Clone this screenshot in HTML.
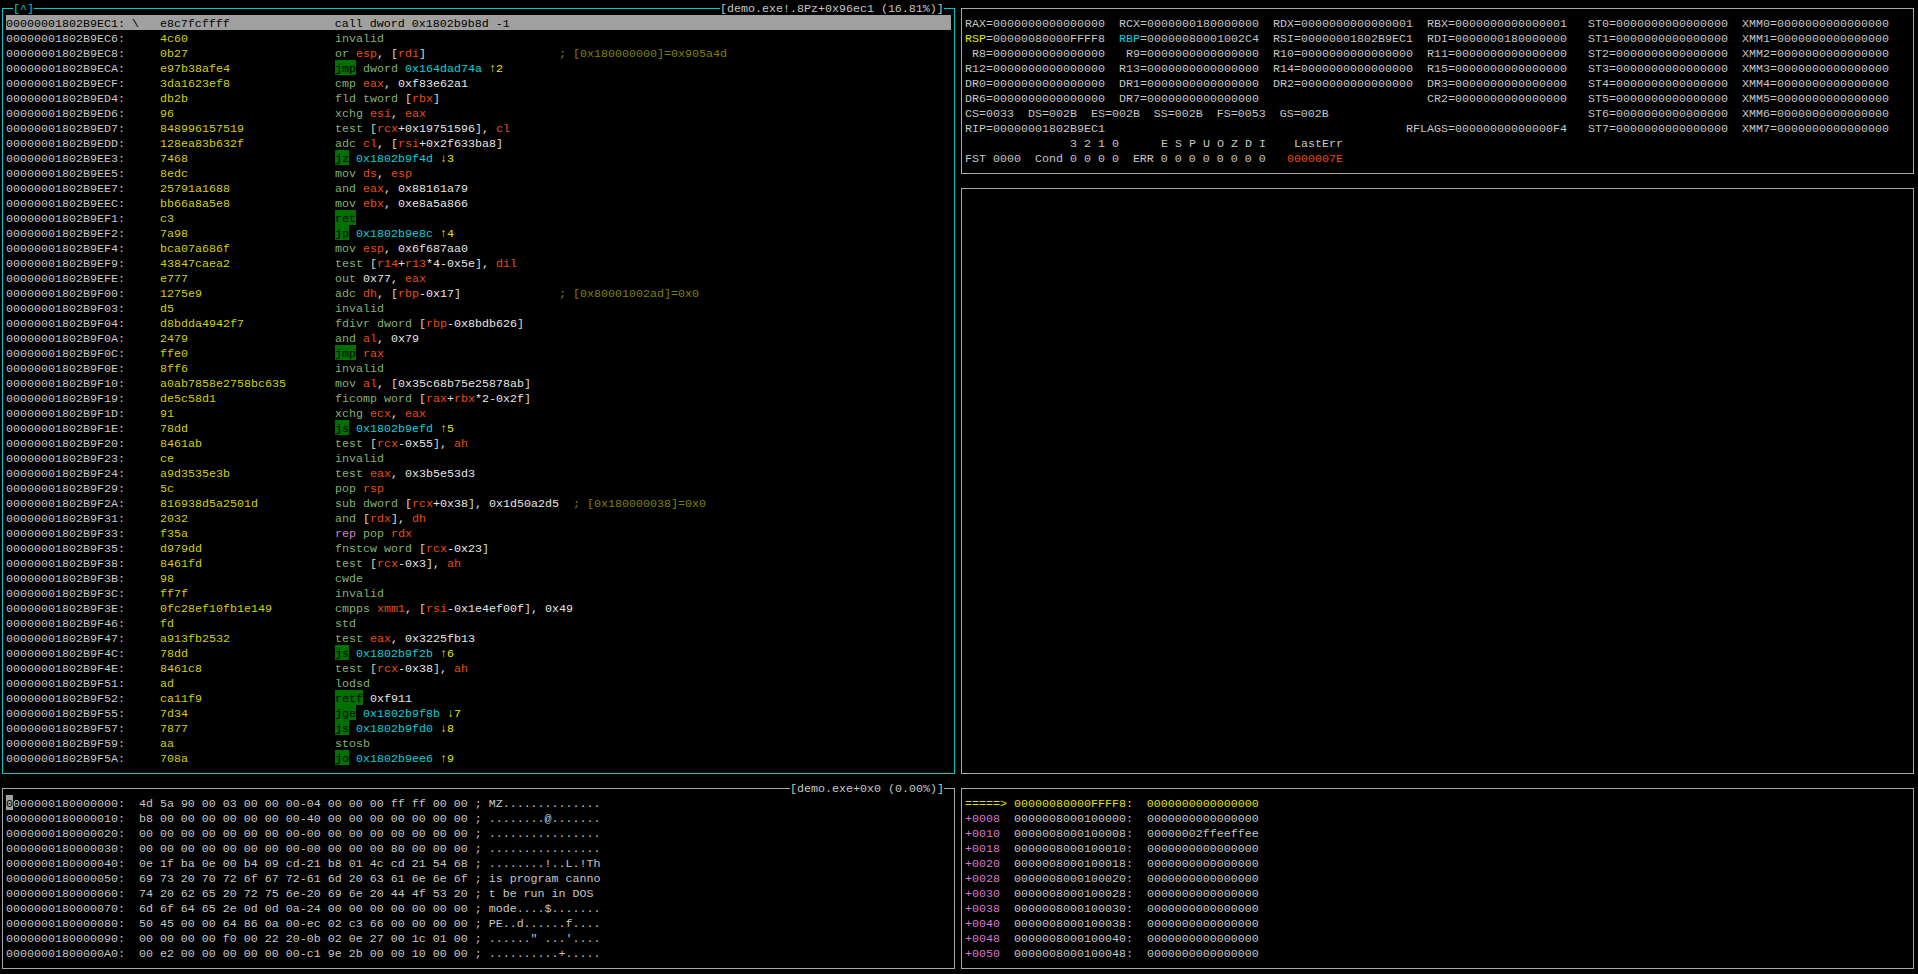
<!DOCTYPE html>
<html><head><meta charset="utf-8"><style>
html,body{margin:0;padding:0;background:#000;width:1918px;height:974px;overflow:hidden;}
body{position:relative;font-family:"Liberation Mono",monospace;font-size:11.665px;color:#c6c6c6;}
.s{position:absolute;white-space:pre;line-height:15px;height:15px;}
.l{position:absolute;}
.hl{position:absolute;left:6px;top:15px;width:945px;height:15px;background:#a0a0a0;}
.hlt{color:#000;}
.addr{color:#c8c8c8}.byte{color:#d2d200}.mn{color:#84b074}.reg{color:#e84c0c}.num{color:#e6e6e6}
.br{color:#d8d8c8}.tgt{color:#00d2dc}.arr{color:#e6e600}.cmt{color:#808000}
.jmp{color:#000;}
.cyan{color:#00c8c8}.txt{color:#c6c6c6}.yel{color:#e0e000}.pink{color:#d878c8}.rep{color:#d080c0}
.cur{color:#000;}
</style></head><body>
<div class="hl"></div>
<div class="l" style="left:2px;top:8px;width:11px;height:1px;background:#00c8c8"></div>
<div class="l" style="left:34px;top:8px;width:686px;height:1px;background:#00c8c8"></div>
<div class="l" style="left:944px;top:8px;width:11px;height:1px;background:#00c8c8"></div>
<div class="l" style="left:2px;top:773px;width:953px;height:1px;background:#00c8c8"></div>
<div class="l" style="left:2px;top:8px;width:1px;height:766px;background:#00c8c8"></div>
<div class="l" style="left:954px;top:8px;width:1px;height:766px;background:#00c8c8"></div>
<div class="l" style="left:961px;top:8px;width:953px;height:1px;background:#a8a8a8"></div>
<div class="l" style="left:961px;top:173px;width:953px;height:1px;background:#a8a8a8"></div>
<div class="l" style="left:961px;top:8px;width:1px;height:166px;background:#a8a8a8"></div>
<div class="l" style="left:1913px;top:8px;width:1px;height:166px;background:#a8a8a8"></div>
<div class="l" style="left:961px;top:188px;width:953px;height:1px;background:#a8a8a8"></div>
<div class="l" style="left:961px;top:773px;width:953px;height:1px;background:#a8a8a8"></div>
<div class="l" style="left:961px;top:188px;width:1px;height:586px;background:#a8a8a8"></div>
<div class="l" style="left:1913px;top:188px;width:1px;height:586px;background:#a8a8a8"></div>
<div class="l" style="left:2px;top:788px;width:788px;height:1px;background:#a8a8a8"></div>
<div class="l" style="left:944px;top:788px;width:11px;height:1px;background:#a8a8a8"></div>
<div class="l" style="left:2px;top:968px;width:953px;height:1px;background:#a8a8a8"></div>
<div class="l" style="left:2px;top:788px;width:1px;height:181px;background:#a8a8a8"></div>
<div class="l" style="left:954px;top:788px;width:1px;height:181px;background:#a8a8a8"></div>
<div class="l" style="left:961px;top:788px;width:953px;height:1px;background:#a8a8a8"></div>
<div class="l" style="left:961px;top:968px;width:953px;height:1px;background:#a8a8a8"></div>
<div class="l" style="left:961px;top:788px;width:1px;height:181px;background:#a8a8a8"></div>
<div class="l" style="left:1913px;top:788px;width:1px;height:181px;background:#a8a8a8"></div>
<div class="l" style="left:335px;top:60px;width:21px;height:15px;background:#007000"></div>
<div class="l" style="left:335px;top:150px;width:14px;height:15px;background:#007000"></div>
<div class="l" style="left:335px;top:210px;width:21px;height:15px;background:#007000"></div>
<div class="l" style="left:335px;top:225px;width:14px;height:15px;background:#007000"></div>
<div class="l" style="left:335px;top:345px;width:21px;height:15px;background:#007000"></div>
<div class="l" style="left:335px;top:420px;width:14px;height:15px;background:#007000"></div>
<div class="l" style="left:335px;top:645px;width:14px;height:15px;background:#007000"></div>
<div class="l" style="left:335px;top:690px;width:28px;height:15px;background:#007000"></div>
<div class="l" style="left:335px;top:705px;width:21px;height:15px;background:#007000"></div>
<div class="l" style="left:335px;top:720px;width:14px;height:15px;background:#007000"></div>
<div class="l" style="left:335px;top:750px;width:14px;height:15px;background:#007000"></div>
<div class="l" style="left:6px;top:795px;width:7px;height:15px;background:#a0a0a0"></div>
<div class="s" style="left:6px;top:17px"><span class="hlt">00000001802B9EC1: \   e8c7fcffff               call dword 0x1802b9b8d -1</span></div>
<div class="s" style="left:6px;top:32px"><span class="addr">00000001802B9EC6:</span></div>
<div class="s" style="left:160px;top:32px"><span class="byte">4c60</span></div>
<div class="s" style="left:335px;top:32px"><span class="mn">invalid</span></div>
<div class="s" style="left:6px;top:47px"><span class="addr">00000001802B9EC8:</span></div>
<div class="s" style="left:160px;top:47px"><span class="byte">0b27</span></div>
<div class="s" style="left:335px;top:47px"><span class="mn">or</span> <span class="reg">esp</span><span class="num">,</span> <span class="br">[</span><span class="reg">rdi</span><span class="br">]</span></div>
<div class="s" style="left:559px;top:47px"><span class="cmt">; [0x180000000]=0x905a4d</span></div>
<div class="s" style="left:6px;top:62px"><span class="addr">00000001802B9ECA:</span></div>
<div class="s" style="left:160px;top:62px"><span class="byte">e97b38afe4</span></div>
<div class="s" style="left:335px;top:62px"><span class="jmp">jmp</span> <span class="mn">dword</span> <span class="tgt">0x164dad74a</span> <span class="arr">↑2</span></div>
<div class="s" style="left:6px;top:77px"><span class="addr">00000001802B9ECF:</span></div>
<div class="s" style="left:160px;top:77px"><span class="byte">3da1623ef8</span></div>
<div class="s" style="left:335px;top:77px"><span class="mn">cmp</span> <span class="reg">eax</span><span class="num">,</span> <span class="num">0xf83e62a1</span></div>
<div class="s" style="left:6px;top:92px"><span class="addr">00000001802B9ED4:</span></div>
<div class="s" style="left:160px;top:92px"><span class="byte">db2b</span></div>
<div class="s" style="left:335px;top:92px"><span class="mn">fld</span> <span class="mn">tword</span> <span class="br">[</span><span class="reg">rbx</span><span class="br">]</span></div>
<div class="s" style="left:6px;top:107px"><span class="addr">00000001802B9ED6:</span></div>
<div class="s" style="left:160px;top:107px"><span class="byte">96</span></div>
<div class="s" style="left:335px;top:107px"><span class="mn">xchg</span> <span class="reg">esi</span><span class="num">,</span> <span class="reg">eax</span></div>
<div class="s" style="left:6px;top:122px"><span class="addr">00000001802B9ED7:</span></div>
<div class="s" style="left:160px;top:122px"><span class="byte">848996157519</span></div>
<div class="s" style="left:335px;top:122px"><span class="mn">test</span> <span class="br">[</span><span class="reg">rcx</span><span class="num">+</span><span class="num">0x19751596</span><span class="br">]</span><span class="num">,</span> <span class="reg">cl</span></div>
<div class="s" style="left:6px;top:137px"><span class="addr">00000001802B9EDD:</span></div>
<div class="s" style="left:160px;top:137px"><span class="byte">128ea83b632f</span></div>
<div class="s" style="left:335px;top:137px"><span class="mn">adc</span> <span class="reg">cl</span><span class="num">,</span> <span class="br">[</span><span class="reg">rsi</span><span class="num">+</span><span class="num">0x2f633ba8</span><span class="br">]</span></div>
<div class="s" style="left:6px;top:152px"><span class="addr">00000001802B9EE3:</span></div>
<div class="s" style="left:160px;top:152px"><span class="byte">7468</span></div>
<div class="s" style="left:335px;top:152px"><span class="jmp">jz</span> <span class="tgt">0x1802b9f4d</span> <span class="arr">↓3</span></div>
<div class="s" style="left:6px;top:167px"><span class="addr">00000001802B9EE5:</span></div>
<div class="s" style="left:160px;top:167px"><span class="byte">8edc</span></div>
<div class="s" style="left:335px;top:167px"><span class="mn">mov</span> <span class="reg">ds</span><span class="num">,</span> <span class="reg">esp</span></div>
<div class="s" style="left:6px;top:182px"><span class="addr">00000001802B9EE7:</span></div>
<div class="s" style="left:160px;top:182px"><span class="byte">25791a1688</span></div>
<div class="s" style="left:335px;top:182px"><span class="mn">and</span> <span class="reg">eax</span><span class="num">,</span> <span class="num">0x88161a79</span></div>
<div class="s" style="left:6px;top:197px"><span class="addr">00000001802B9EEC:</span></div>
<div class="s" style="left:160px;top:197px"><span class="byte">bb66a8a5e8</span></div>
<div class="s" style="left:335px;top:197px"><span class="mn">mov</span> <span class="reg">ebx</span><span class="num">,</span> <span class="num">0xe8a5a866</span></div>
<div class="s" style="left:6px;top:212px"><span class="addr">00000001802B9EF1:</span></div>
<div class="s" style="left:160px;top:212px"><span class="byte">c3</span></div>
<div class="s" style="left:335px;top:212px"><span class="jmp">ret</span></div>
<div class="s" style="left:6px;top:227px"><span class="addr">00000001802B9EF2:</span></div>
<div class="s" style="left:160px;top:227px"><span class="byte">7a98</span></div>
<div class="s" style="left:335px;top:227px"><span class="jmp">jp</span> <span class="tgt">0x1802b9e8c</span> <span class="arr">↑4</span></div>
<div class="s" style="left:6px;top:242px"><span class="addr">00000001802B9EF4:</span></div>
<div class="s" style="left:160px;top:242px"><span class="byte">bca07a686f</span></div>
<div class="s" style="left:335px;top:242px"><span class="mn">mov</span> <span class="reg">esp</span><span class="num">,</span> <span class="num">0x6f687aa0</span></div>
<div class="s" style="left:6px;top:257px"><span class="addr">00000001802B9EF9:</span></div>
<div class="s" style="left:160px;top:257px"><span class="byte">43847caea2</span></div>
<div class="s" style="left:335px;top:257px"><span class="mn">test</span> <span class="br">[</span><span class="reg">r14</span><span class="num">+</span><span class="reg">r13</span><span class="num">*</span><span class="num">4</span><span class="num">-</span><span class="num">0x5e</span><span class="br">]</span><span class="num">,</span> <span class="reg">dil</span></div>
<div class="s" style="left:6px;top:272px"><span class="addr">00000001802B9EFE:</span></div>
<div class="s" style="left:160px;top:272px"><span class="byte">e777</span></div>
<div class="s" style="left:335px;top:272px"><span class="mn">out</span> <span class="num">0x77</span><span class="num">,</span> <span class="reg">eax</span></div>
<div class="s" style="left:6px;top:287px"><span class="addr">00000001802B9F00:</span></div>
<div class="s" style="left:160px;top:287px"><span class="byte">1275e9</span></div>
<div class="s" style="left:335px;top:287px"><span class="mn">adc</span> <span class="reg">dh</span><span class="num">,</span> <span class="br">[</span><span class="reg">rbp</span><span class="num">-</span><span class="num">0x17</span><span class="br">]</span></div>
<div class="s" style="left:559px;top:287px"><span class="cmt">; [0x80001002ad]=0x0</span></div>
<div class="s" style="left:6px;top:302px"><span class="addr">00000001802B9F03:</span></div>
<div class="s" style="left:160px;top:302px"><span class="byte">d5</span></div>
<div class="s" style="left:335px;top:302px"><span class="mn">invalid</span></div>
<div class="s" style="left:6px;top:317px"><span class="addr">00000001802B9F04:</span></div>
<div class="s" style="left:160px;top:317px"><span class="byte">d8bdda4942f7</span></div>
<div class="s" style="left:335px;top:317px"><span class="mn">fdivr</span> <span class="mn">dword</span> <span class="br">[</span><span class="reg">rbp</span><span class="num">-</span><span class="num">0x8bdb626</span><span class="br">]</span></div>
<div class="s" style="left:6px;top:332px"><span class="addr">00000001802B9F0A:</span></div>
<div class="s" style="left:160px;top:332px"><span class="byte">2479</span></div>
<div class="s" style="left:335px;top:332px"><span class="mn">and</span> <span class="reg">al</span><span class="num">,</span> <span class="num">0x79</span></div>
<div class="s" style="left:6px;top:347px"><span class="addr">00000001802B9F0C:</span></div>
<div class="s" style="left:160px;top:347px"><span class="byte">ffe0</span></div>
<div class="s" style="left:335px;top:347px"><span class="jmp">jmp</span> <span class="reg">rax</span></div>
<div class="s" style="left:6px;top:362px"><span class="addr">00000001802B9F0E:</span></div>
<div class="s" style="left:160px;top:362px"><span class="byte">8ff6</span></div>
<div class="s" style="left:335px;top:362px"><span class="mn">invalid</span></div>
<div class="s" style="left:6px;top:377px"><span class="addr">00000001802B9F10:</span></div>
<div class="s" style="left:160px;top:377px"><span class="byte">a0ab7858e2758bc635</span></div>
<div class="s" style="left:335px;top:377px"><span class="mn">mov</span> <span class="reg">al</span><span class="num">,</span> <span class="br">[</span><span class="num">0x35c68b75e25878ab</span><span class="br">]</span></div>
<div class="s" style="left:6px;top:392px"><span class="addr">00000001802B9F19:</span></div>
<div class="s" style="left:160px;top:392px"><span class="byte">de5c58d1</span></div>
<div class="s" style="left:335px;top:392px"><span class="mn">ficomp</span> <span class="mn">word</span> <span class="br">[</span><span class="reg">rax</span><span class="num">+</span><span class="reg">rbx</span><span class="num">*</span><span class="num">2</span><span class="num">-</span><span class="num">0x2f</span><span class="br">]</span></div>
<div class="s" style="left:6px;top:407px"><span class="addr">00000001802B9F1D:</span></div>
<div class="s" style="left:160px;top:407px"><span class="byte">91</span></div>
<div class="s" style="left:335px;top:407px"><span class="mn">xchg</span> <span class="reg">ecx</span><span class="num">,</span> <span class="reg">eax</span></div>
<div class="s" style="left:6px;top:422px"><span class="addr">00000001802B9F1E:</span></div>
<div class="s" style="left:160px;top:422px"><span class="byte">78dd</span></div>
<div class="s" style="left:335px;top:422px"><span class="jmp">js</span> <span class="tgt">0x1802b9efd</span> <span class="arr">↑5</span></div>
<div class="s" style="left:6px;top:437px"><span class="addr">00000001802B9F20:</span></div>
<div class="s" style="left:160px;top:437px"><span class="byte">8461ab</span></div>
<div class="s" style="left:335px;top:437px"><span class="mn">test</span> <span class="br">[</span><span class="reg">rcx</span><span class="num">-</span><span class="num">0x55</span><span class="br">]</span><span class="num">,</span> <span class="reg">ah</span></div>
<div class="s" style="left:6px;top:452px"><span class="addr">00000001802B9F23:</span></div>
<div class="s" style="left:160px;top:452px"><span class="byte">ce</span></div>
<div class="s" style="left:335px;top:452px"><span class="mn">invalid</span></div>
<div class="s" style="left:6px;top:467px"><span class="addr">00000001802B9F24:</span></div>
<div class="s" style="left:160px;top:467px"><span class="byte">a9d3535e3b</span></div>
<div class="s" style="left:335px;top:467px"><span class="mn">test</span> <span class="reg">eax</span><span class="num">,</span> <span class="num">0x3b5e53d3</span></div>
<div class="s" style="left:6px;top:482px"><span class="addr">00000001802B9F29:</span></div>
<div class="s" style="left:160px;top:482px"><span class="byte">5c</span></div>
<div class="s" style="left:335px;top:482px"><span class="mn">pop</span> <span class="reg">rsp</span></div>
<div class="s" style="left:6px;top:497px"><span class="addr">00000001802B9F2A:</span></div>
<div class="s" style="left:160px;top:497px"><span class="byte">816938d5a2501d</span></div>
<div class="s" style="left:335px;top:497px"><span class="mn">sub</span> <span class="mn">dword</span> <span class="br">[</span><span class="reg">rcx</span><span class="num">+</span><span class="num">0x38</span><span class="br">]</span><span class="num">,</span> <span class="num">0x1d50a2d5</span></div>
<div class="s" style="left:573px;top:497px"><span class="cmt">; [0x180000038]=0x0</span></div>
<div class="s" style="left:6px;top:512px"><span class="addr">00000001802B9F31:</span></div>
<div class="s" style="left:160px;top:512px"><span class="byte">2032</span></div>
<div class="s" style="left:335px;top:512px"><span class="mn">and</span> <span class="br">[</span><span class="reg">rdx</span><span class="br">]</span><span class="num">,</span> <span class="reg">dh</span></div>
<div class="s" style="left:6px;top:527px"><span class="addr">00000001802B9F33:</span></div>
<div class="s" style="left:160px;top:527px"><span class="byte">f35a</span></div>
<div class="s" style="left:335px;top:527px"><span class="rep">rep</span> <span class="mn">pop</span> <span class="reg">rdx</span></div>
<div class="s" style="left:6px;top:542px"><span class="addr">00000001802B9F35:</span></div>
<div class="s" style="left:160px;top:542px"><span class="byte">d979dd</span></div>
<div class="s" style="left:335px;top:542px"><span class="mn">fnstcw</span> <span class="mn">word</span> <span class="br">[</span><span class="reg">rcx</span><span class="num">-</span><span class="num">0x23</span><span class="br">]</span></div>
<div class="s" style="left:6px;top:557px"><span class="addr">00000001802B9F38:</span></div>
<div class="s" style="left:160px;top:557px"><span class="byte">8461fd</span></div>
<div class="s" style="left:335px;top:557px"><span class="mn">test</span> <span class="br">[</span><span class="reg">rcx</span><span class="num">-</span><span class="num">0x3</span><span class="br">]</span><span class="num">,</span> <span class="reg">ah</span></div>
<div class="s" style="left:6px;top:572px"><span class="addr">00000001802B9F3B:</span></div>
<div class="s" style="left:160px;top:572px"><span class="byte">98</span></div>
<div class="s" style="left:335px;top:572px"><span class="mn">cwde</span></div>
<div class="s" style="left:6px;top:587px"><span class="addr">00000001802B9F3C:</span></div>
<div class="s" style="left:160px;top:587px"><span class="byte">ff7f</span></div>
<div class="s" style="left:335px;top:587px"><span class="mn">invalid</span></div>
<div class="s" style="left:6px;top:602px"><span class="addr">00000001802B9F3E:</span></div>
<div class="s" style="left:160px;top:602px"><span class="byte">0fc28ef10fb1e149</span></div>
<div class="s" style="left:335px;top:602px"><span class="mn">cmpps</span> <span class="reg">xmm1</span><span class="num">,</span> <span class="br">[</span><span class="reg">rsi</span><span class="num">-</span><span class="num">0x1e4ef00f</span><span class="br">]</span><span class="num">,</span> <span class="num">0x49</span></div>
<div class="s" style="left:6px;top:617px"><span class="addr">00000001802B9F46:</span></div>
<div class="s" style="left:160px;top:617px"><span class="byte">fd</span></div>
<div class="s" style="left:335px;top:617px"><span class="mn">std</span></div>
<div class="s" style="left:6px;top:632px"><span class="addr">00000001802B9F47:</span></div>
<div class="s" style="left:160px;top:632px"><span class="byte">a913fb2532</span></div>
<div class="s" style="left:335px;top:632px"><span class="mn">test</span> <span class="reg">eax</span><span class="num">,</span> <span class="num">0x3225fb13</span></div>
<div class="s" style="left:6px;top:647px"><span class="addr">00000001802B9F4C:</span></div>
<div class="s" style="left:160px;top:647px"><span class="byte">78dd</span></div>
<div class="s" style="left:335px;top:647px"><span class="jmp">js</span> <span class="tgt">0x1802b9f2b</span> <span class="arr">↑6</span></div>
<div class="s" style="left:6px;top:662px"><span class="addr">00000001802B9F4E:</span></div>
<div class="s" style="left:160px;top:662px"><span class="byte">8461c8</span></div>
<div class="s" style="left:335px;top:662px"><span class="mn">test</span> <span class="br">[</span><span class="reg">rcx</span><span class="num">-</span><span class="num">0x38</span><span class="br">]</span><span class="num">,</span> <span class="reg">ah</span></div>
<div class="s" style="left:6px;top:677px"><span class="addr">00000001802B9F51:</span></div>
<div class="s" style="left:160px;top:677px"><span class="byte">ad</span></div>
<div class="s" style="left:335px;top:677px"><span class="mn">lodsd</span></div>
<div class="s" style="left:6px;top:692px"><span class="addr">00000001802B9F52:</span></div>
<div class="s" style="left:160px;top:692px"><span class="byte">ca11f9</span></div>
<div class="s" style="left:335px;top:692px"><span class="jmp">retf</span> <span class="num">0xf911</span></div>
<div class="s" style="left:6px;top:707px"><span class="addr">00000001802B9F55:</span></div>
<div class="s" style="left:160px;top:707px"><span class="byte">7d34</span></div>
<div class="s" style="left:335px;top:707px"><span class="jmp">jge</span> <span class="tgt">0x1802b9f8b</span> <span class="arr">↓7</span></div>
<div class="s" style="left:6px;top:722px"><span class="addr">00000001802B9F57:</span></div>
<div class="s" style="left:160px;top:722px"><span class="byte">7877</span></div>
<div class="s" style="left:335px;top:722px"><span class="jmp">js</span> <span class="tgt">0x1802b9fd0</span> <span class="arr">↓8</span></div>
<div class="s" style="left:6px;top:737px"><span class="addr">00000001802B9F59:</span></div>
<div class="s" style="left:160px;top:737px"><span class="byte">aa</span></div>
<div class="s" style="left:335px;top:737px"><span class="mn">stosb</span></div>
<div class="s" style="left:6px;top:752px"><span class="addr">00000001802B9F5A:</span></div>
<div class="s" style="left:160px;top:752px"><span class="byte">708a</span></div>
<div class="s" style="left:335px;top:752px"><span class="jmp">jo</span> <span class="tgt">0x1802b9ee6</span> <span class="arr">↑9</span></div>
<div class="s" style="left:965px;top:17px"><span class="txt">RAX=0000000000000000</span></div>
<div class="s" style="left:1119px;top:17px"><span class="txt">RCX=0000000180000000</span></div>
<div class="s" style="left:1273px;top:17px"><span class="txt">RDX=0000000000000001</span></div>
<div class="s" style="left:1427px;top:17px"><span class="txt">RBX=0000000000000001</span></div>
<div class="s" style="left:965px;top:32px"><span class="arr">RSP</span><span class="txt">=00000080000FFFF8</span></div>
<div class="s" style="left:1119px;top:32px"><span class="tgt">RBP</span><span class="txt">=00000080001002C4</span></div>
<div class="s" style="left:1273px;top:32px"><span class="txt">RSI=00000001802B9EC1</span></div>
<div class="s" style="left:1427px;top:32px"><span class="txt">RDI=0000000180000000</span></div>
<div class="s" style="left:965px;top:47px"><span class="txt"> R8=0000000000000000</span></div>
<div class="s" style="left:1119px;top:47px"><span class="txt"> R9=0000000000000000</span></div>
<div class="s" style="left:1273px;top:47px"><span class="txt">R10=0000000000000000</span></div>
<div class="s" style="left:1427px;top:47px"><span class="txt">R11=0000000000000000</span></div>
<div class="s" style="left:965px;top:62px"><span class="txt">R12=0000000000000000</span></div>
<div class="s" style="left:1119px;top:62px"><span class="txt">R13=0000000000000000</span></div>
<div class="s" style="left:1273px;top:62px"><span class="txt">R14=0000000000000000</span></div>
<div class="s" style="left:1427px;top:62px"><span class="txt">R15=0000000000000000</span></div>
<div class="s" style="left:965px;top:77px"><span class="txt">DR0=0000000000000000</span></div>
<div class="s" style="left:1119px;top:77px"><span class="txt">DR1=0000000000000000</span></div>
<div class="s" style="left:1273px;top:77px"><span class="txt">DR2=0000000000000000</span></div>
<div class="s" style="left:1427px;top:77px"><span class="txt">DR3=0000000000000000</span></div>
<div class="s" style="left:965px;top:92px"><span class="txt">DR6=0000000000000000</span></div>
<div class="s" style="left:1119px;top:92px"><span class="txt">DR7=0000000000000000</span></div>
<div class="s" style="left:1427px;top:92px"><span class="txt">CR2=0000000000000000</span></div>
<div class="s" style="left:1588px;top:17px"><span class="txt">ST0=0000000000000000</span></div>
<div class="s" style="left:1742px;top:17px"><span class="txt">XMM0=0000000000000000</span></div>
<div class="s" style="left:1588px;top:32px"><span class="txt">ST1=0000000000000000</span></div>
<div class="s" style="left:1742px;top:32px"><span class="txt">XMM1=0000000000000000</span></div>
<div class="s" style="left:1588px;top:47px"><span class="txt">ST2=0000000000000000</span></div>
<div class="s" style="left:1742px;top:47px"><span class="txt">XMM2=0000000000000000</span></div>
<div class="s" style="left:1588px;top:62px"><span class="txt">ST3=0000000000000000</span></div>
<div class="s" style="left:1742px;top:62px"><span class="txt">XMM3=0000000000000000</span></div>
<div class="s" style="left:1588px;top:77px"><span class="txt">ST4=0000000000000000</span></div>
<div class="s" style="left:1742px;top:77px"><span class="txt">XMM4=0000000000000000</span></div>
<div class="s" style="left:1588px;top:92px"><span class="txt">ST5=0000000000000000</span></div>
<div class="s" style="left:1742px;top:92px"><span class="txt">XMM5=0000000000000000</span></div>
<div class="s" style="left:1588px;top:107px"><span class="txt">ST6=0000000000000000</span></div>
<div class="s" style="left:1742px;top:107px"><span class="txt">XMM6=0000000000000000</span></div>
<div class="s" style="left:1588px;top:122px"><span class="txt">ST7=0000000000000000</span></div>
<div class="s" style="left:1742px;top:122px"><span class="txt">XMM7=0000000000000000</span></div>
<div class="s" style="left:965px;top:107px"><span class="txt">CS=0033  DS=002B  ES=002B  SS=002B  FS=0053  GS=002B</span></div>
<div class="s" style="left:965px;top:122px"><span class="txt">RIP=00000001802B9EC1</span></div>
<div class="s" style="left:1406px;top:122px"><span class="txt">RFLAGS=00000000000000F4</span></div>
<div class="s" style="left:1070px;top:137px"><span class="txt">3 2 1 0</span></div>
<div class="s" style="left:1161px;top:137px"><span class="txt">E S P U O Z D I</span></div>
<div class="s" style="left:1294px;top:137px"><span class="txt">LastErr</span></div>
<div class="s" style="left:965px;top:152px"><span class="txt">FST 0000  Cond 0 0 0 0  ERR 0 0 0 0 0 0 0 0</span></div>
<div class="s" style="left:1287px;top:152px"><span class="reg">0000007E</span></div>
<div class="s" style="left:6px;top:797px"><span class="cur">0</span><span class="txt">000000180000000:  4d 5a 90 00 03 00 00 00-04 00 00 00 ff ff 00 00 ; MZ..............</span></div>
<div class="s" style="left:6px;top:812px"><span class="txt">0000000180000010:  b8 00 00 00 00 00 00 00-40 00 00 00 00 00 00 00 ; ........@.......</span></div>
<div class="s" style="left:6px;top:827px"><span class="txt">0000000180000020:  00 00 00 00 00 00 00 00-00 00 00 00 00 00 00 00 ; ................</span></div>
<div class="s" style="left:6px;top:842px"><span class="txt">0000000180000030:  00 00 00 00 00 00 00 00-00 00 00 00 80 00 00 00 ; ................</span></div>
<div class="s" style="left:6px;top:857px"><span class="txt">0000000180000040:  0e 1f ba 0e 00 b4 09 cd-21 b8 01 4c cd 21 54 68 ; ........!..L.!Th</span></div>
<div class="s" style="left:6px;top:872px"><span class="txt">0000000180000050:  69 73 20 70 72 6f 67 72-61 6d 20 63 61 6e 6e 6f ; is program canno</span></div>
<div class="s" style="left:6px;top:887px"><span class="txt">0000000180000060:  74 20 62 65 20 72 75 6e-20 69 6e 20 44 4f 53 20 ; t be run in DOS </span></div>
<div class="s" style="left:6px;top:902px"><span class="txt">0000000180000070:  6d 6f 64 65 2e 0d 0d 0a-24 00 00 00 00 00 00 00 ; mode....$.......</span></div>
<div class="s" style="left:6px;top:917px"><span class="txt">0000000180000080:  50 45 00 00 64 86 0a 00-ec 02 c3 66 00 00 00 00 ; PE..d......f....</span></div>
<div class="s" style="left:6px;top:932px"><span class="txt">0000000180000090:  00 00 00 00 f0 00 22 20-0b 02 0e 27 00 1c 01 00 ; ......&quot; ...&#x27;....</span></div>
<div class="s" style="left:6px;top:947px"><span class="txt">00000001800000A0:  00 e2 00 00 00 00 00 00-c1 9e 2b 00 00 10 00 00 ; ..........+.....</span></div>
<div class="s" style="left:965px;top:797px"><span class="yel">=====&gt; 00000080000FFFF8:  0000000000000000</span></div>
<div class="s" style="left:965px;top:812px"><span class="pink">+0008</span>  <span class="txt">0000008000100000:  0000000000000000</span></div>
<div class="s" style="left:965px;top:827px"><span class="pink">+0010</span>  <span class="txt">0000008000100008:  00000002ffeeffee</span></div>
<div class="s" style="left:965px;top:842px"><span class="pink">+0018</span>  <span class="txt">0000008000100010:  0000000000000000</span></div>
<div class="s" style="left:965px;top:857px"><span class="pink">+0020</span>  <span class="txt">0000008000100018:  0000000000000000</span></div>
<div class="s" style="left:965px;top:872px"><span class="pink">+0028</span>  <span class="txt">0000008000100020:  0000000000000000</span></div>
<div class="s" style="left:965px;top:887px"><span class="pink">+0030</span>  <span class="txt">0000008000100028:  0000000000000000</span></div>
<div class="s" style="left:965px;top:902px"><span class="pink">+0038</span>  <span class="txt">0000008000100030:  0000000000000000</span></div>
<div class="s" style="left:965px;top:917px"><span class="pink">+0040</span>  <span class="txt">0000008000100038:  0000000000000000</span></div>
<div class="s" style="left:965px;top:932px"><span class="pink">+0048</span>  <span class="txt">0000008000100040:  0000000000000000</span></div>
<div class="s" style="left:965px;top:947px"><span class="pink">+0050</span>  <span class="txt">0000008000100048:  0000000000000000</span></div>
<div class="s" style="left:13px;top:2px"><span class="cyan">[^]</span></div>
<div class="s" style="left:720px;top:2px"><span class="txt">[demo.exe!.8Pz+0x96ec1 (16.81%)]</span></div>
<div class="s" style="left:790px;top:782px"><span class="txt">[demo.exe+0x0 (0.00%)]</span></div>
</body></html>
